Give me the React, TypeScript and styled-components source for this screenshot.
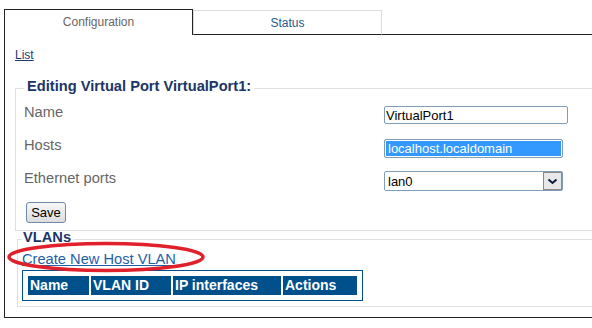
import React from 'react';
import styled, { createGlobalStyle } from 'styled-components';

const Global = createGlobalStyle`
  html, body { margin: 0; padding: 0; background: #fff; overflow: hidden; }
  body { font-family: "Liberation Sans", Arial, sans-serif; }
  *, *::before, *::after { box-sizing: border-box; }
`;

const Page = styled.div`
  padding: 9px 0 0 4px;
`;

const TabStrip = styled.div`
  display: flex;
  align-items: flex-end;
  height: 26px;
`;

const Tab = styled.div<{ $active?: boolean }>`
  width: 189px;
  height: ${(p) => (p.$active ? 26 : 25)}px;
  border: 1px solid ${(p) => (p.$active ? '#222' : '#dcdce6')};
  border-bottom: ${(p) => (p.$active ? 'none' : '1px solid #222')};
  background: #fff;
  padding-top: 5px;
  text-align: center;
  font-size: 12px;
  line-height: 14px;
  color: ${(p) => (p.$active ? '#666' : '#1d5a8f')};
`;

const TabFiller = styled.div`
  flex: 1;
  align-self: stretch;
  border-bottom: 1px solid #222;
`;

const Panel = styled.div`
  border-left: 1px solid #222;
  border-bottom: 1px solid #222;
  padding: 13px 0 10px 10px;
`;

const ListLink = styled.a`
  display: block;
  font-size: 12px;
  line-height: 14px;
  color: #1a3c6e;
  text-decoration: underline;
`;

const Fieldset = styled.fieldset<{ $left: number; $padLeft: number; $padBottom: number; $top: number }>`
  margin: ${(p) => p.$top}px 0 0 ${(p) => p.$left}px;
  border: 1px solid #e0e0e0;
  border-right: none;
  padding: 2px 0 ${(p) => p.$padBottom}px ${(p) => p.$padLeft}px;
  min-width: 0;
`;

const Legend = styled.legend<{ $padLeft: number }>`
  padding: 0 3px 4px ${(p) => p.$padLeft}px;
  font-size: 14.67px;
  line-height: 13px;
  font-weight: bold;
  color: #1b3565;
`;

const FormGrid = styled.div`
  display: grid;
  grid-template-columns: 360px auto;
  grid-auto-rows: 32px;
  row-gap: 1px;
  align-items: center;
  justify-items: start;
`;

const Label = styled.span`
  align-self: start;
  padding-top: 5px;
  font-size: 14.67px;
  line-height: 17px;
  color: #666;
`;

const TextField = styled.input<{ $w: number; $h: number; $selected?: boolean }>`
  width: ${(p) => p.$w}px;
  height: ${(p) => p.$h}px;
  border: 1px solid #7f9db9;
  border-radius: 2px;
  padding: 0 ${(p) => (p.$selected ? 3 : 1)}px;
  font-family: "Liberation Sans", Arial, sans-serif;
  font-size: 13px;
  color: ${(p) => (p.$selected ? '#fff' : '#000')};
  background: ${(p) => (p.$selected ? '#3399ff' : '#fff')};
  box-shadow: ${(p) => (p.$selected ? 'inset 0 0 0 1px #fff' : 'none')};
  outline: none;
`;

const SelectBox = styled.div`
  width: 179px;
  height: 20px;
  border: 1px solid #7f9db9;
  border-radius: 2px;
  display: flex;
  align-items: center;
  padding-left: 3px;
  font-size: 13px;
  color: #000;
`;

const DropButton = styled.span`
  margin-left: auto;
  width: 19px;
  height: 18px;
  background: #e8e8e8;
  border: 1px solid #8a8a8a;
  display: flex;
  align-items: center;
  justify-content: center;
`;

const SaveRow = styled.div`
  margin-top: 5px;
  padding-left: 2px;
`;

const SaveButton = styled.button`
  width: 40px;
  height: 21px;
  padding: 0;
  border: 1px solid #6d8aad;
  border-radius: 3px;
  background: linear-gradient(#f7f7f7, #dddddd);
  font-family: "Liberation Sans", Arial, sans-serif;
  font-size: 13px;
  color: #000;
`;

const CreateLink = styled.a`
  position: relative;
  display: inline-block;
  font-size: 14.67px;
  line-height: 17px;
  color: #1f5fa6;
  text-decoration: underline;
`;

const Annotation = styled.svg`
  position: absolute;
  left: -15px;
  top: -10px;
  pointer-events: none;
  overflow: visible;
`;

const VlanTable = styled.table`
  display: table;
  margin-top: 2px;
  border: 1px solid #00508c;
  border-spacing: 2px;
  padding: 3px;
`;

const Th = styled.th<{ $w: number }>`
  width: ${(p) => p.$w}px;
  height: 19px;
  padding: 0 0 0 2px;
  background: #00508c;
  color: #fff;
  font-family: "Liberation Sans", Arial, sans-serif;
  font-size: 14px;
  line-height: 19px;
  font-weight: bold;
  text-align: left;
  white-space: nowrap;
`;

export default function App() {
  return (
    <Page>
      <Global />
      <TabStrip>
        <Tab $active>Configuration</Tab>
        <Tab>Status</Tab>
        <TabFiller />
      </TabStrip>
      <Panel>
        <ListLink href="#">List</ListLink>
        <Fieldset $top={18} $left={0} $padLeft={8} $padBottom={7}>
          <Legend $padLeft={3}>Editing Virtual Port VirtualPort1:</Legend>
          <FormGrid>
            <Label>Name</Label>
            <TextField $w={184} $h={18} value="VirtualPort1" readOnly />
            <Label>Hosts</Label>
            <TextField $w={179} $h={19} $selected value="localhost.localdomain" readOnly />
            <Label>Ethernet ports</Label>
            <SelectBox>
              lan0
              <DropButton>
                <svg width="11" height="7" viewBox="0 0 11 7">
                  <polyline points="1.5,1.5 5.5,5 9.5,1.5" fill="none" stroke="#0d1b3d" strokeWidth="2" />
                </svg>
              </DropButton>
            </SelectBox>
          </FormGrid>
          <SaveRow>
            <SaveButton>Save</SaveButton>
          </SaveRow>
        </Fieldset>
        <Fieldset $top={0} $left={2} $padLeft={4} $padBottom={5}>
          <Legend $padLeft={1}>VLANs</Legend>
          <CreateLink href="#">
            Create New Host VLAN
            <Annotation width="198" height="31" viewBox="0 0 198 31">
              <ellipse cx="99" cy="16" rx="97" ry="13.5" fill="none" stroke="#e0202b" strokeWidth="3.5" />
            </Annotation>
          </CreateLink>
          <VlanTable>
            <thead>
              <tr>
                <Th $w={61}>Name</Th>
                <Th $w={80}>VLAN ID</Th>
                <Th $w={108}>IP interfaces</Th>
                <Th $w={74}>Actions</Th>
              </tr>
            </thead>
          </VlanTable>
        </Fieldset>
      </Panel>
    </Page>
  );
}
